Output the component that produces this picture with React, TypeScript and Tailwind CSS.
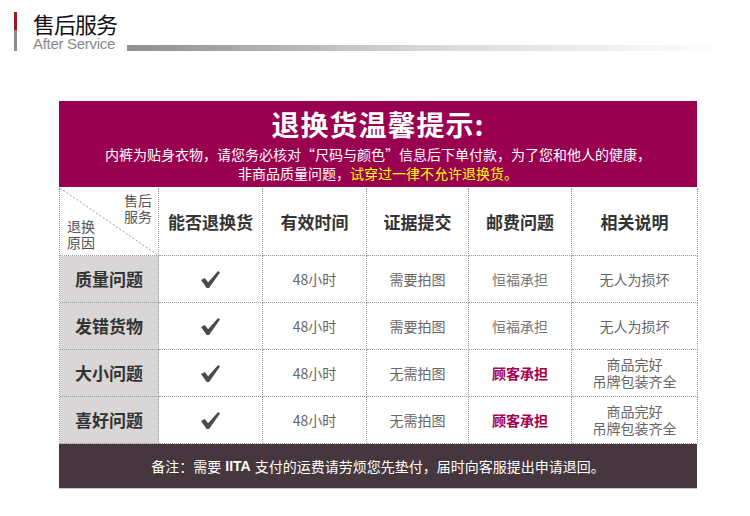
import React from "react";

const font = { fontFamily: '"Noto Sans CJK SC", "Noto Sans", sans-serif' };

interface Row {
  reason: string;
  evidence: string;
  postage: string;
  customerPays: boolean;
  note: string[];
}

const rows: Row[] = [
  { reason: "质量问题", evidence: "需要拍图", postage: "恒福承担", customerPays: false, note: ["无人为损坏"] },
  { reason: "发错货物", evidence: "需要拍图", postage: "恒福承担", customerPays: false, note: ["无人为损坏"] },
  { reason: "大小问题", evidence: "无需拍图", postage: "顾客承担", customerPays: true, note: ["商品完好", "吊牌包装齐全"] },
  { reason: "喜好问题", evidence: "无需拍图", postage: "顾客承担", customerPays: true, note: ["商品完好", "吊牌包装齐全"] },
];

const headers = ["能否退换货", "有效时间", "证据提交", "邮费问题", "相关说明"];

const cell = "flex items-center justify-center border-r border-b border-dotted border-[#9a9a9a]";

const Check = () => (
  <svg width="21" height="19" viewBox="0 0 22 20">
    <path d="M1 10.5 L5 8.5 L8.5 13 L19 1 L21 2.5 L9.5 19 L7 19 Z" fill="#4e4a4c" />
  </svg>
);

export default function App() {
  return (
    <div className="w-[750px] h-[516px] bg-white overflow-hidden" style={font}>
      {/* section title */}
      <div className="flex items-end pt-[11px] pl-[14px]">
        <div className="flex flex-col w-[3px] h-[39px]">
          <div className="h-[18px] bg-[#9b1b1b]" />
          <div className="flex-1 bg-[#8c8c8c]" />
        </div>
        <div className="ml-[16px] flex flex-col">
          <div className="text-[22px] leading-[24px] text-[#111] tracking-[-1px]">售后服务</div>
          <div
            className="mt-[1px] text-[15px] leading-[15px] text-[#8a8a8a] tracking-[-0.3px]"
            style={{ fontFamily: '"Liberation Sans", Arial, sans-serif' }}
          >
            After Service
          </div>
        </div>
        <div className="ml-[10px] h-[6px] w-[600px] bg-gradient-to-r from-[#8f8f8f] via-[#d8d8d8] to-white" />
      </div>

      <div className="ml-[59px] mt-[50px] w-[638px]">
        {/* magenta banner */}
        <div className="h-[86px] bg-[#99004f] flex flex-col items-center text-white">
          <div className="mt-[6px] text-[28px] leading-[34px] font-bold tracking-[1px]">退换货温馨提示:</div>
          <div className="mt-[4px] text-[14px] leading-[19px]">
            内裤为贴身衣物，请您务必核对“尺码与颜色”信息后下单付款，为了您和他人的健康，
          </div>
          <div className="text-[14px] leading-[19px]">
            非商品质量问题，<span className="text-[#ffff00]">试穿过一律不允许退换货。</span>
          </div>
        </div>

        {/* table */}
        <div className="grid grid-cols-[99px_104px_104px_102px_103px_126px] border-l border-dotted border-[#9a9a9a] mt-[1px]">
          <div className="relative h-[68px] border-r border-b border-dotted border-[#9a9a9a] text-[14px] leading-[16px] text-[#555]">
            <svg className="absolute inset-0" width="99" height="68">
              <line x1="0" y1="0" x2="99" y2="68" stroke="#9a9a9a" strokeWidth="1" strokeDasharray="2 2" />
            </svg>
            <div className="absolute right-[6px] top-[4px] text-right">
              售后
              <br />
              服务
            </div>
            <div className="absolute left-[7px] bottom-[5px]">
              退换
              <br />
              原因
            </div>
          </div>
          {headers.map((h) => (
            <div key={h} className={`${cell} h-[68px] text-[17px] font-bold text-[#333]`}>
              {h}
            </div>
          ))}

          {rows.map((r) => (
            <React.Fragment key={r.reason}>
              <div className={`${cell} h-[47px] bg-[#d8d6d7] text-[17px] font-bold text-[#333]`}>{r.reason}</div>
              <div className={`${cell} h-[47px]`}>
                <Check />
              </div>
              <div className={`${cell} h-[47px] text-[14px] text-[#666]`}>48小时</div>
              <div className={`${cell} h-[47px] text-[14px] text-[#666]`}>{r.evidence}</div>
              <div
                className={`${cell} h-[47px] text-[14px] ${r.customerPays ? "font-bold text-[#a3004f]" : "text-[#777]"}`}
              >
                {r.postage}
              </div>
              <div className={`${cell} h-[47px] flex-col text-[14px] leading-[17px] text-[#666]`}>
                {r.note.map((n) => (
                  <span key={n}>{n}</span>
                ))}
              </div>
            </React.Fragment>
          ))}
        </div>

        {/* footer note */}
        <div className="h-[45px] bg-[#45373d] border-b border-[#c8c8c8] flex items-center justify-center text-[14px] text-white">
          备注：需要 <span className="font-bold mx-[4px]" style={{ fontFamily: '"Liberation Sans", sans-serif' }}>IITA</span> 支付的运费请劳烦您先垫付，届时向客服提出申请退回。
        </div>
      </div>
    </div>
  );
}
